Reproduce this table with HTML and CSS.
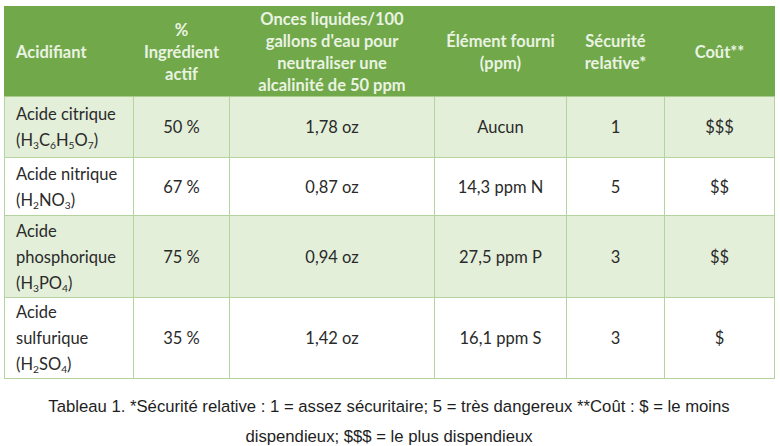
FILE: index.html
```html
<!DOCTYPE html>
<html lang="fr">
<head>
<meta charset="utf-8">
<link rel="stylesheet" href="styles.css">
</head>
<body>
<div class="page">
<table class="acid">
  <colgroup>
    <col class="c1"><col class="c2"><col class="c3"><col class="c4"><col class="c5"><col class="c6">
  </colgroup>
  <thead>
    <tr class="hrow">
      <th class="left">Acidifiant</th>
      <th>%<br>Ingrédient<br>actif</th>
      <th>Onces liquides/100<br>gallons d'eau pour<br>neutraliser une<br>alcalinité de 50 ppm</th>
      <th>Élément fourni<br>(ppm)</th>
      <th>Sécurité<br>relative*</th>
      <th>Coût**</th>
    </tr>
  </thead>
  <tbody>
    <tr class="band r1">
      <td class="left">Acide citrique<br>(H<sub>3</sub>C<sub>6</sub>H<sub>5</sub>O<sub>7</sub>)</td>
      <td>50 %</td>
      <td>1,78 oz</td>
      <td>Aucun</td>
      <td>1</td>
      <td>$$$</td>
    </tr>
    <tr class="r2">
      <td class="left">Acide nitrique<br>(H<sub>2</sub>NO<sub>3</sub>)</td>
      <td>67 %</td>
      <td>0,87 oz</td>
      <td>14,3 ppm N</td>
      <td>5</td>
      <td>$$</td>
    </tr>
    <tr class="band r3">
      <td class="left">Acide<br>phosphorique<br>(H<sub>3</sub>PO<sub>4</sub>)</td>
      <td>75 %</td>
      <td>0,94 oz</td>
      <td>27,5 ppm P</td>
      <td>3</td>
      <td>$$</td>
    </tr>
    <tr class="r4">
      <td class="left">Acide<br>sulfurique<br>(H<sub>2</sub>SO<sub>4</sub>)</td>
      <td>35 %</td>
      <td>1,42 oz</td>
      <td>16,1 ppm S</td>
      <td>3</td>
      <td>$</td>
    </tr>
  </tbody>
</table>
<p class="caption">Tableau 1. *Sécurité relative : 1 = assez sécuritaire; 5 = très dangereux **Coût : $ = le moins<br>dispendieux; $$$ = le plus dispendieux</p>
</div>
</body>
</html>
```
FILE: styles.css
```css
html, body {
  margin: 0;
  padding: 0;
  background: #ffffff;
}
.page {
  padding: 6px 6px 0 4px;
}
.acid {
  border-collapse: collapse;
  table-layout: fixed;
  width: 770px;
  font-family: Lato, "Open Sans", sans-serif;
  font-size: 16.5px;
  color: #2a2a2a;
}
.c1 { width: 129px; }
.c2 { width: 96px; }
.c3 { width: 205px; }
.c4 { width: 132px; }
.c5 { width: 98px; }
.c6 { width: 110px; }
.acid th {
  background: #70a84a;
  color: #eaf3e2;
  font-weight: 700;
  line-height: 22px;
  text-align: center;
  vertical-align: middle;
  padding: 0 2px;
  border: 1px solid #70a84a;
  border-bottom-color: #a8cc8e;
}
.acid td {
  text-align: center;
  vertical-align: middle;
  line-height: 26px;
  padding: 0 2px;
  border: 1px solid #b5d39f;
}
.acid .left {
  text-align: left;
  padding-left: 11px;
}
.acid sub {
  font-size: 0.62em;
  line-height: 0;
  vertical-align: -0.25em;
}
.hrow { height: 90px; }
.r1 { height: 61px; }
.r2 { height: 58px; }
.r3 { height: 82px; }
.r4 { height: 81px; }
.band td { background: #e3efd9; }
.caption {
  margin: 13px 0 0 0;
  text-align: center;
  font-family: "Liberation Sans", Arial, sans-serif;
  font-size: 16.7px;
  line-height: 30px;
  color: #1e1e1e;
}
```
